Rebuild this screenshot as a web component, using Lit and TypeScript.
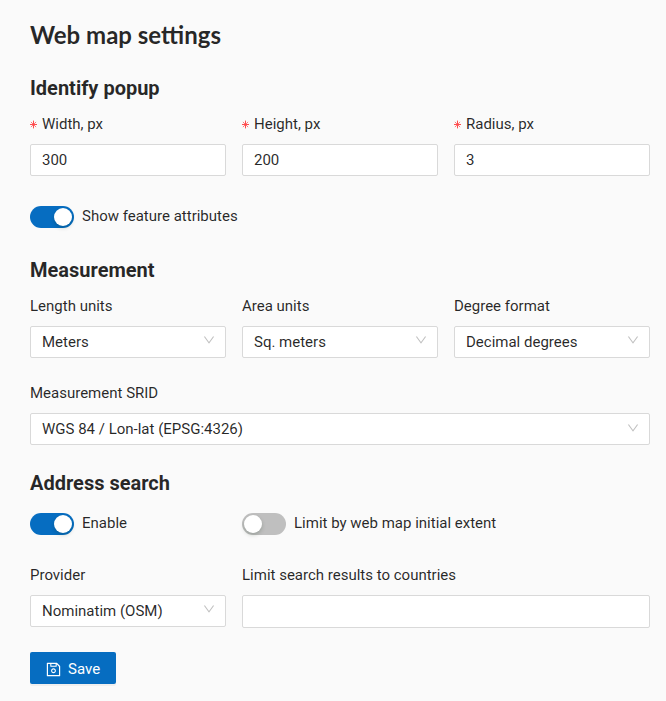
import { LitElement, html, css, nothing } from "lit";
import { customElement, property } from "lit/decorators.js";

@customElement("form-field")
class FormField extends LitElement {
  @property() label = "";
  @property() value = "";
  @property({ type: Boolean }) required = false;
  @property({ type: Boolean }) select = false;

  static styles = css`
    :host { display: block; min-width: 0; }
    .label { display: flex; height: 24px; line-height: 24px; margin-bottom: 8px; }
    .star { width: 8px; height: 24px; margin-right: 4px; flex: none; }
    .box {
      box-sizing: border-box; height: var(--box-height, 32px); padding: 0 10px 0 11px;
      border: 1px solid #d9d9d9; border-radius: 2px; background: #fff;
      display: flex; justify-content: space-between; line-height: 30px;
    }
    .arrow { width: 12px; height: 12px; margin-top: var(--arrow-top, 7px); fill: rgba(0, 0, 0, 0.25); }
  `;

  render() {
    return html`
      <div class="label">
        ${this.required
          ? html`<svg class="star" viewBox="0 0 8 24" fill="none" stroke="#ff4d4f">
              <path d="M0 12.5H7M3.5 8.6V16.4" stroke-width="1" />
              <path d="M0.9 9.9L6.1 15.1M6.1 9.9L0.9 15.1" stroke-width="0.75" />
            </svg>`
          : nothing}
        <span>${this.label}</span>
      </div>
      <div class="box">
        <span>${this.value}</span>
        ${this.select
          ? html`<svg class="arrow" viewBox="64 64 896 896">
              <path d="M884 256h-75c-5.1 0-9.9 2.5-12.9 6.6L512 654.2 227.9 262.6c-3-4.1-7.8-6.6-12.9-6.6h-75c-6.5 0-10.3 7.4-6.5 12.7l352.6 486.1c12.8 17.6 39 17.6 51.7 0l352.6-486.1c3.9-5.3.1-12.7-6.4-12.7z" />
            </svg>`
          : nothing}
      </div>
    `;
  }
}

@customElement("toggle-switch")
class ToggleSwitch extends LitElement {
  @property({ type: Boolean, reflect: true }) checked = false;
  @property() label = "";

  static styles = css`
    :host { display: flex; height: 24px; line-height: 24px; }
    .track {
      box-sizing: border-box; display: flex; width: 44px; height: 22px; padding: 2px;
      margin: 2px 8px 0 0; border-radius: 11px; background: #bfbfbf; flex: none;
    }
    :host([checked]) .track { background: #066dc1; justify-content: flex-end; }
    .knob { width: 18px; height: 18px; border-radius: 9px; background: #fff; box-shadow: 0 2px 4px rgba(0, 35, 11, 0.2); }
  `;

  render() {
    return html`<div class="track"><div class="knob"></div></div><span>${this.label}</span>`;
  }
}

@customElement("app-root")
class AppRoot extends LitElement {
  static styles = css`
    :host {
      display: block; box-sizing: border-box; height: 701px; padding: 19px 16px 0 30px;
      background: #fafafa; color: rgba(0, 0, 0, 0.85);
      font-family: Roboto, sans-serif; font-size: 15px;
    }
    h1 { margin: 0 0 24px; font: 700 24px/32px Lato, sans-serif; }
    h2 { margin: 0; font-size: 20px; font-weight: 700; line-height: 26px; }
    .grid { display: grid; grid-template-columns: repeat(3, 196px); column-gap: 16px; }
    .fields { margin-top: 11px; }
    .attributes { margin: 28px 0 29px; }
    .full { grid-column: span 3; margin-top: 23px; --arrow-top: 8px; }
    .search { margin-top: 25px; }
    .toggles { margin: 15px 0 28px; }
    .wide { grid-column: span 2; }
    .tall { --box-height: 33px; }
    .save {
      display: flex; align-items: center; box-sizing: border-box; width: 86px; height: 32px;
      margin: 24px 0 0; padding: 2px 15px 0 16px; border: 0; border-radius: 2px;
      background: #066dc1; color: #fff; font: 400 15px/24px Roboto, sans-serif;
      box-shadow: 0 2px 0 rgba(0, 0, 0, 0.045);
    }
    .save svg { width: 15px; height: 15px; margin-right: 7px; fill: currentColor; }
  `;

  render() {
    return html`
      <h1>Web map settings</h1>

      <h2>Identify popup</h2>
      <div class="grid fields">
        <form-field label="Width, px" value="300" required></form-field>
        <form-field label="Height, px" value="200" required></form-field>
        <form-field label="Radius, px" value="3" required></form-field>
      </div>
      <toggle-switch class="attributes" label="Show feature attributes" checked></toggle-switch>

      <h2>Measurement</h2>
      <div class="grid fields">
        <form-field label="Length units" value="Meters" select></form-field>
        <form-field label="Area units" value="Sq. meters" select></form-field>
        <form-field label="Degree format" value="Decimal degrees" select></form-field>
        <form-field class="full" label="Measurement SRID" value="WGS 84 / Lon-lat (EPSG:4326)" select></form-field>
      </div>

      <h2 class="search">Address search</h2>
      <div class="grid toggles">
        <toggle-switch label="Enable" checked></toggle-switch>
        <toggle-switch class="wide" label="Limit by web map initial extent"></toggle-switch>
      </div>
      <div class="grid">
        <form-field label="Provider" value="Nominatim (OSM)" select></form-field>
        <form-field class="wide tall" label="Limit search results to countries"></form-field>
      </div>

      <button class="save">
        <svg viewBox="64 64 896 896">
          <path d="M893.3 293.3L730.7 130.7c-7.5-7.5-16.7-13-26.7-16V112H144c-17.7 0-32 14.3-32 32v736c0 17.7 14.3 32 32 32h736c17.7 0 32-14.3 32-32V338.5c0-17-6.7-33.2-18.7-45.2zM384 184h256v104H384V184zm456 656H184V184h136v136c0 17.7 14.3 32 32 32h320c17.7 0 32-14.3 32-32V205.8l136 136V840zM512 442c-79.5 0-144 64.5-144 144s64.5 144 144 144 144-64.5 144-144-64.5-144-144-144zm0 224c-44.2 0-80-35.8-80-80s35.8-80 80-80 80 35.8 80 80-35.8 80-80 80z" />
        </svg>
        <span>Save</span>
      </button>
    `;
  }
}
